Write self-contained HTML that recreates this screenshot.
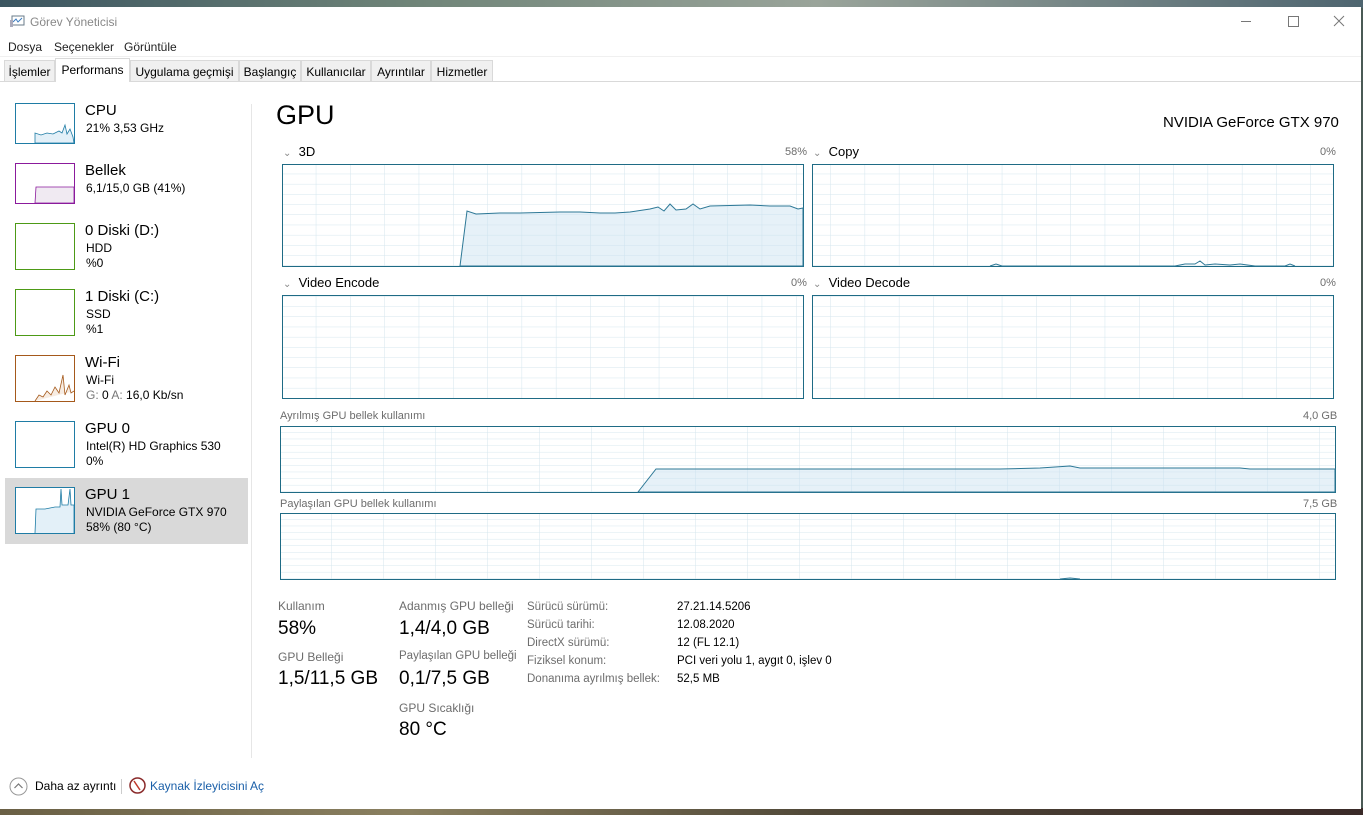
<!DOCTYPE html>
<html><head><meta charset="utf-8"><style>
*{margin:0;padding:0;box-sizing:border-box}
body{width:1363px;height:815px;overflow:hidden;background:#4a5a55;font-family:"Liberation Sans",sans-serif;color:#000;position:relative}
.bgtop{position:absolute;left:0;top:0;width:1363px;height:8px;background:linear-gradient(90deg,#3b5560,#6f8478 30%,#9aa49a 60%,#4e6570)}
.bgbot{position:absolute;left:0;top:808px;width:1363px;height:7px;background:linear-gradient(90deg,#6a6045,#8a8060 30%,#504838 60%,#3a2a28)}
.win{position:absolute;left:0;top:7px;width:1361px;height:802px;background:#fff}
.a{position:absolute;white-space:nowrap}
.tab{position:absolute;top:60px;height:22px;border:1px solid #d9d9d9;background:#f0f0f0;font-size:12px;padding:4px 0 0 0;text-align:center}
.s{font-size:12px;color:#000}
.l{font-size:11px;color:#6d6d6d}
.tn{font-size:15px}
</style></head><body>
<div class="bgtop"></div><div class="bgbot"></div>
<div class="win"></div>
<svg class="a" style="left:9px;top:15px" width="16" height="14"><rect x="3" y="1" width="12" height="9" fill="#fff" stroke="#6a7b8a"/><polyline points="4,7 7,4 9,7 13,3" fill="none" stroke="#3a7bbf"/><rect x="1" y="5" width="3" height="7" fill="#aab"/></svg>
<div class="a" style="left:30px;top:15px;font-size:12px;color:#888">Görev Yöneticisi</div>
<svg class="a" style="left:1236px;top:12px" width="110" height="20"><line x1="5" y1="9.5" x2="15" y2="9.5" stroke="#777"/><rect x="52.5" y="4.5" width="10" height="10" fill="none" stroke="#777"/><path d="M98 4L108 14M108 4L98 14" stroke="#777"/></svg>
<div class="a" style="left:8px;top:40px;font-size:12px;color:#222">Dosya</div>
<div class="a" style="left:54px;top:40px;font-size:12px;color:#222">Seçenekler</div>
<div class="a" style="left:124px;top:40px;font-size:12px;color:#222">Görüntüle</div>
<div class="a" style="left:0;top:56px;width:1361px;height:1px;background:#f0f0f0"></div>
<div class="a" style="left:0;top:81px;width:1361px;height:1px;background:#d9d9d9"></div>
<div class="tab" style="left:4px;width:51px">İşlemler</div>
<div class="tab" style="left:55px;width:75px;top:58px;height:24px;background:#fff;border-bottom:none;font-size:12px">Performans</div>
<div class="tab" style="left:130px;width:109px">Uygulama geçmişi</div>
<div class="tab" style="left:239px;width:62px">Başlangıç</div>
<div class="tab" style="left:301px;width:70px">Kullanıcılar</div>
<div class="tab" style="left:371px;width:60px">Ayrıntılar</div>
<div class="tab" style="left:431px;width:62px">Hizmetler</div>

<div class="a" style="left:251px;top:104px;width:1px;height:654px;background:#e6e6e6"></div>
<div class="a" style="left:5px;top:478px;width:243px;height:66px;background:#d9d9d9"></div>

<svg class="a" style="left:15px;top:103px" width="60" height="42"><rect x="0.5" y="0.5" width="59" height="40" fill="#fff" stroke="#1f7ca5"/><polygon points="20,40 20,30 26,32 32,30 38,31 44,28 47,30 50,22 52,31 55,26 58,34 59,40" fill="#e3f0f8" stroke="#1f7ca5" stroke-width="0.8"/></svg>
<div class="a tn" style="left:85px;top:102px">CPU</div><div class="a s" style="left:86px;top:121px">21% 3,53 GHz</div>

<svg class="a" style="left:15px;top:163px" width="60" height="42"><rect x="0.5" y="0.5" width="59" height="40" fill="#fff" stroke="#8b1a9c"/><polygon points="20,40 21,24 59,24 59,40" fill="#f0eaf2" stroke="#8b1a9c" stroke-width="0.8"/></svg>
<div class="a tn" style="left:85px;top:162px">Bellek</div><div class="a s" style="left:86px;top:181px">6,1/15,0 GB (41%)</div>

<svg class="a" style="left:15px;top:223px" width="60" height="48"><rect x="0.5" y="0.5" width="59" height="46" fill="#fff" stroke="#4d9a16"/></svg>
<div class="a tn" style="left:85px;top:222px">0 Diski (D:)</div><div class="a s" style="left:86px;top:241px">HDD</div><div class="a s" style="left:86px;top:256px">%0</div>

<svg class="a" style="left:15px;top:289px" width="60" height="48"><rect x="0.5" y="0.5" width="59" height="46" fill="#fff" stroke="#4d9a16"/></svg>
<div class="a tn" style="left:85px;top:288px">1 Diski (C:)</div><div class="a s" style="left:86px;top:307px">SSD</div><div class="a s" style="left:86px;top:322px">%1</div>

<svg class="a" style="left:15px;top:355px" width="60" height="48"><rect x="0.5" y="0.5" width="59" height="46" fill="#fff" stroke="#a5591b"/><polyline points="20,46 24,40 28,42 32,36 36,40 40,32 44,38 48,20 50,40 54,30 56,38 59,36" fill="#f7ece2" stroke="#a5591b" stroke-width="0.8"/></svg>
<div class="a tn" style="left:85px;top:354px">Wi-Fi</div><div class="a s" style="left:86px;top:373px">Wi-Fi</div><div class="a s" style="left:86px;top:388px"><span style="color:#777">G:</span> 0 <span style="color:#777">A:</span> 16,0 Kb/sn</div>

<svg class="a" style="left:15px;top:421px" width="60" height="48"><rect x="0.5" y="0.5" width="59" height="46" fill="#fff" stroke="#1f7ca5"/></svg>
<div class="a tn" style="left:85px;top:420px">GPU 0</div><div class="a s" style="left:86px;top:439px">Intel(R) HD Graphics 530</div><div class="a s" style="left:86px;top:454px">0%</div>

<svg class="a" style="left:15px;top:487px" width="60" height="48"><rect x="0.5" y="0.5" width="59" height="46" fill="#fff" stroke="#1f7ca5"/><polyline points="20,46 21,22 30,22 40,20 45,20 46,2 47,18 53,18 55,2 56,18 59,18 59,46" fill="#e3f0f8" stroke="#1f7ca5" stroke-width="0.8"/></svg>
<div class="a tn" style="left:85px;top:486px">GPU 1</div><div class="a s" style="left:86px;top:505px">NVIDIA GeForce GTX 970</div><div class="a s" style="left:86px;top:520px">58% (80 °C)</div>

<div class="a" style="left:276px;top:100px;font-size:27px">GPU</div>
<div class="a" style="left:1163px;top:114px;font-size:15px">NVIDIA GeForce GTX 970</div>

<div class="a" style="left:283px;top:144px;font-size:13px"><span style="color:#888;font-size:10px">⌄</span>&nbsp; 3D</div>
<div class="a l" style="left:785px;top:146px">58%</div>
<div class="a" style="left:813px;top:144px;font-size:13px"><span style="color:#888;font-size:10px">⌄</span>&nbsp; Copy</div>
<div class="a l" style="left:1320px;top:146px">0%</div>
<div class="a" style="left:283px;top:275px;font-size:13px"><span style="color:#888;font-size:10px">⌄</span>&nbsp; Video Encode</div>
<div class="a l" style="left:791px;top:277px">0%</div>
<div class="a" style="left:813px;top:275px;font-size:13px"><span style="color:#888;font-size:10px">⌄</span>&nbsp; Video Decode</div>
<div class="a l" style="left:1320px;top:277px">0%</div>
<div class="a l" style="left:280px;top:410px">Ayrılmış GPU bellek kullanımı</div>
<div class="a l" style="left:1303px;top:410px">4,0 GB</div>
<div class="a l" style="left:280px;top:498px">Paylaşılan GPU bellek kullanımı</div>
<div class="a l" style="left:1303px;top:498px">7,5 GB</div>

<svg class="a" style="left:0;top:0" width="1363" height="815">
<defs>
<pattern id="pb" width="34.3" height="10.2" patternUnits="userSpaceOnUse" x="282" y="164"><path d="M34.3 0V10.2M0 10.2H34.3" stroke="#d5e6ee" fill="none" stroke-width="1"/></pattern>
<pattern id="pm" width="52" height="6.6" patternUnits="userSpaceOnUse" x="280" y="426"><path d="M52 0V6.6M0 6.6H52" stroke="#d5e6ee" fill="none" stroke-width="1"/></pattern>
<pattern id="pm2" width="52" height="6.6" patternUnits="userSpaceOnUse" x="280" y="513"><path d="M52 0V6.6M0 6.6H52" stroke="#d5e6ee" fill="none" stroke-width="1"/></pattern>
</defs>
<g stroke="#1f6b85" stroke-width="1">
<rect x="282.5" y="164.5" width="521" height="102" fill="url(#pb)"/>
<rect x="812.5" y="164.5" width="521" height="102" fill="url(#pb)"/>
<rect x="282.5" y="295.5" width="521" height="103" fill="url(#pb)"/>
<rect x="812.5" y="295.5" width="521" height="103" fill="url(#pb)"/>
<rect x="280.5" y="426.5" width="1055" height="66" fill="url(#pm)"/>
<rect x="280.5" y="513.5" width="1055" height="66" fill="url(#pm2)"/>
</g>
<polygon points="460,266 467,211 476,214 500,213 520,213 560,212 580,212 600,213 615,213 630,212 650,209 658,207 664,211 670,204 676,210 686,209 693,204 700,209 710,206 750,205 770,206 790,206 798,209 803,208 803,266" fill="rgba(200,225,240,0.45)" stroke="#2d7896" stroke-width="1"/>
<polyline points="990,266 996,264 1002,266 1175,266 1185,264 1195,264 1200,261 1205,265 1215,264 1230,265 1240,264 1255,266 1285,266 1290,264 1295,266" fill="none" stroke="#2d7896" stroke-width="1"/>
<polygon points="638,492 656,469 1000,469 1040,468 1070,466 1080,468 1240,468 1250,469 1335,469 1335,492" fill="rgba(200,225,240,0.45)" stroke="#2d7896" stroke-width="1"/>
<polyline points="1060,579 1070,578 1080,579" fill="none" stroke="#2d7896"/>
</svg>

<div class="a l" style="left:278px;top:599px;font-size:12px">Kullanım</div>
<div class="a" style="left:278px;top:618px;font-size:19px">58%</div>
<div class="a l" style="left:278px;top:650px;font-size:12px">GPU Belleği</div>
<div class="a" style="left:278px;top:668px;font-size:19px">1,5/11,5 GB</div>
<div class="a l" style="left:399px;top:599px;font-size:12px">Adanmış GPU belleği</div>
<div class="a" style="left:399px;top:618px;font-size:19px">1,4/4,0 GB</div>
<div class="a l" style="left:399px;top:650px;font-size:11.5px">Paylaşılan GPU belleği</div>
<div class="a" style="left:399px;top:668px;font-size:19px">0,1/7,5 GB</div>
<div class="a l" style="left:399px;top:701px;font-size:12px">GPU Sıcaklığı</div>
<div class="a" style="left:399px;top:719px;font-size:19px">80 °C</div>

<div class="a l" style="left:527px;top:598px;line-height:18px;font-size:11.5px">Sürücü sürümü:<br>Sürücü tarihi:<br>DirectX sürümü:<br>Fiziksel konum:<br>Donanıma ayrılmış bellek:</div>
<div class="a" style="left:677px;top:598px;line-height:18px;font-size:11.5px">27.21.14.5206<br>12.08.2020<br>12 (FL 12.1)<br>PCI veri yolu 1, aygıt 0, işlev 0<br>52,5 MB</div>

<svg class="a" style="left:9px;top:777px" width="19" height="19"><circle cx="9.5" cy="9.5" r="8.5" fill="#fff" stroke="#999"/><polyline points="5.5,11 9.5,7 13.5,11" fill="none" stroke="#777" stroke-width="1.2"/></svg>
<div class="a" style="left:35px;top:779px;font-size:12px">Daha az ayrıntı</div>
<div class="a" style="left:121px;top:779px;width:1px;height:15px;background:#ccc"></div>
<svg class="a" style="left:129px;top:777px" width="17" height="17"><circle cx="8.5" cy="8.5" r="7.5" fill="#fff" stroke="#8a2a2a" stroke-width="1.5"/><line x1="5" y1="4" x2="11" y2="13" stroke="#c0392b" stroke-width="1.5"/></svg>
<div class="a" style="left:150px;top:779px;font-size:12px;color:#1a5fa8">Kaynak İzleyicisini Aç</div>
</body></html>
